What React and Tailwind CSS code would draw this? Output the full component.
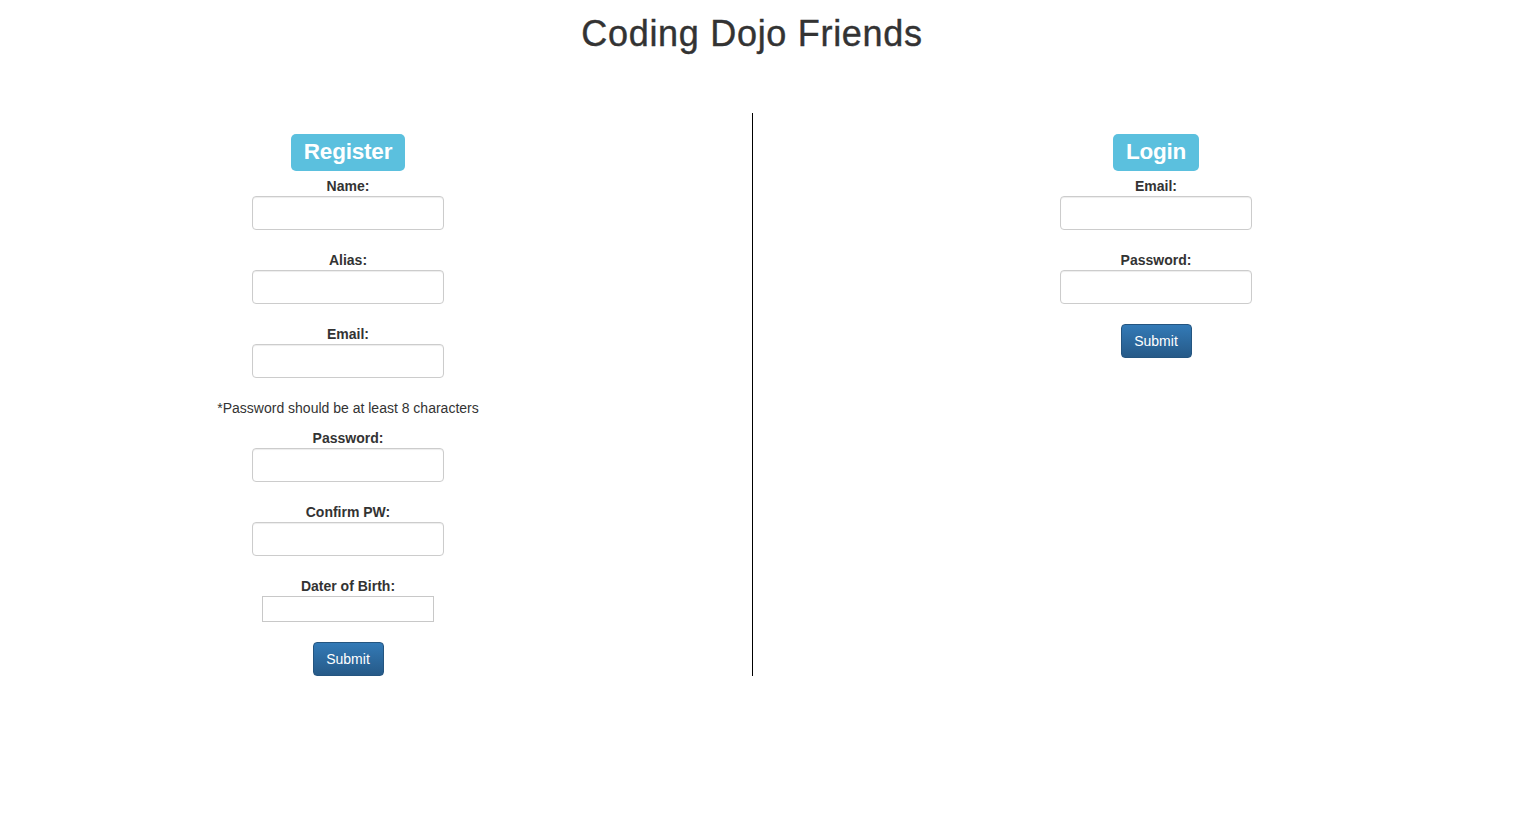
import React from 'react';

const font = { fontFamily: '"Liberation Sans", Arial, sans-serif' };

const Field = ({ label, first }) => (
  <div className={`flex flex-col items-center ${first ? 'mt-[5px]' : 'mt-[20px]'}`}>
    <label className="block h-[20px] text-[14px] leading-[20px] font-bold text-[#333]">{label}</label>
    <input
      type="text"
      className="w-[192px] h-[34px] border border-[#ccc] rounded-[4px] bg-white shadow-[inset_0_1px_1px_rgba(0,0,0,0.075)] outline-none"
    />
  </div>
);

const Badge = ({ children }) => (
  <span className="inline-flex items-center justify-center h-[37px] px-[13px] rounded-[5px] bg-[#5bc0de] text-white text-[22.5px] font-bold leading-none tracking-[-0.2px]">
    {children}
  </span>
);

const SubmitButton = () => (
  <button className="mt-[20px] w-[71px] h-[34px] rounded-[4px] border border-[#245580] bg-gradient-to-b from-[#337ab7] to-[#265a88] text-white text-[14px] leading-[20px]">
    Submit
  </button>
);

export default function App() {
  return (
    <div className="w-[1504px] min-h-[828px] bg-white text-[#333]" style={font}>
      <h1 className="pt-[14px] text-center text-[36px] leading-[40px] font-normal tracking-[0.7px] text-[#333] [-webkit-text-stroke:0.4px_#333]">
        Coding Dojo Friends
      </h1>

      <div className="mt-[59px] flex">
        {/* Register */}
        <div className="w-[753px] border-r border-black">
          <div className="w-[696px] pt-[21px] flex flex-col items-center">
            <Badge>Register</Badge>
            <Field label="Name:" first />
            <Field label="Alias:" />
            <Field label="Email:" />
            <p className="mt-[20px] text-[14px] leading-[20px] text-[#333]">
              *Password should be at least 8 characters
            </p>
            <div className="mt-[10px] flex flex-col items-center">
              <label className="block h-[20px] text-[14px] leading-[20px] font-bold">Password:</label>
              <input
                type="password"
                className="w-[192px] h-[34px] border border-[#ccc] rounded-[4px] bg-white shadow-[inset_0_1px_1px_rgba(0,0,0,0.075)] outline-none"
              />
            </div>
            <Field label="Confirm PW:" />
            <div className="mt-[20px] flex flex-col items-center">
              <label className="block h-[20px] text-[14px] leading-[20px] font-bold">Dater of Birth:</label>
              <div className="w-[172px] h-[26px] border border-[#c8c8c8] bg-white" />
            </div>
            <SubmitButton />
          </div>
        </div>

        {/* Login */}
        <div className="pl-[55px]">
          <div className="w-[696px] pt-[21px] flex flex-col items-center">
            <Badge>Login</Badge>
            <Field label="Email:" first />
            <Field label="Password:" />
            <SubmitButton />
          </div>
        </div>
      </div>
    </div>
  );
}
